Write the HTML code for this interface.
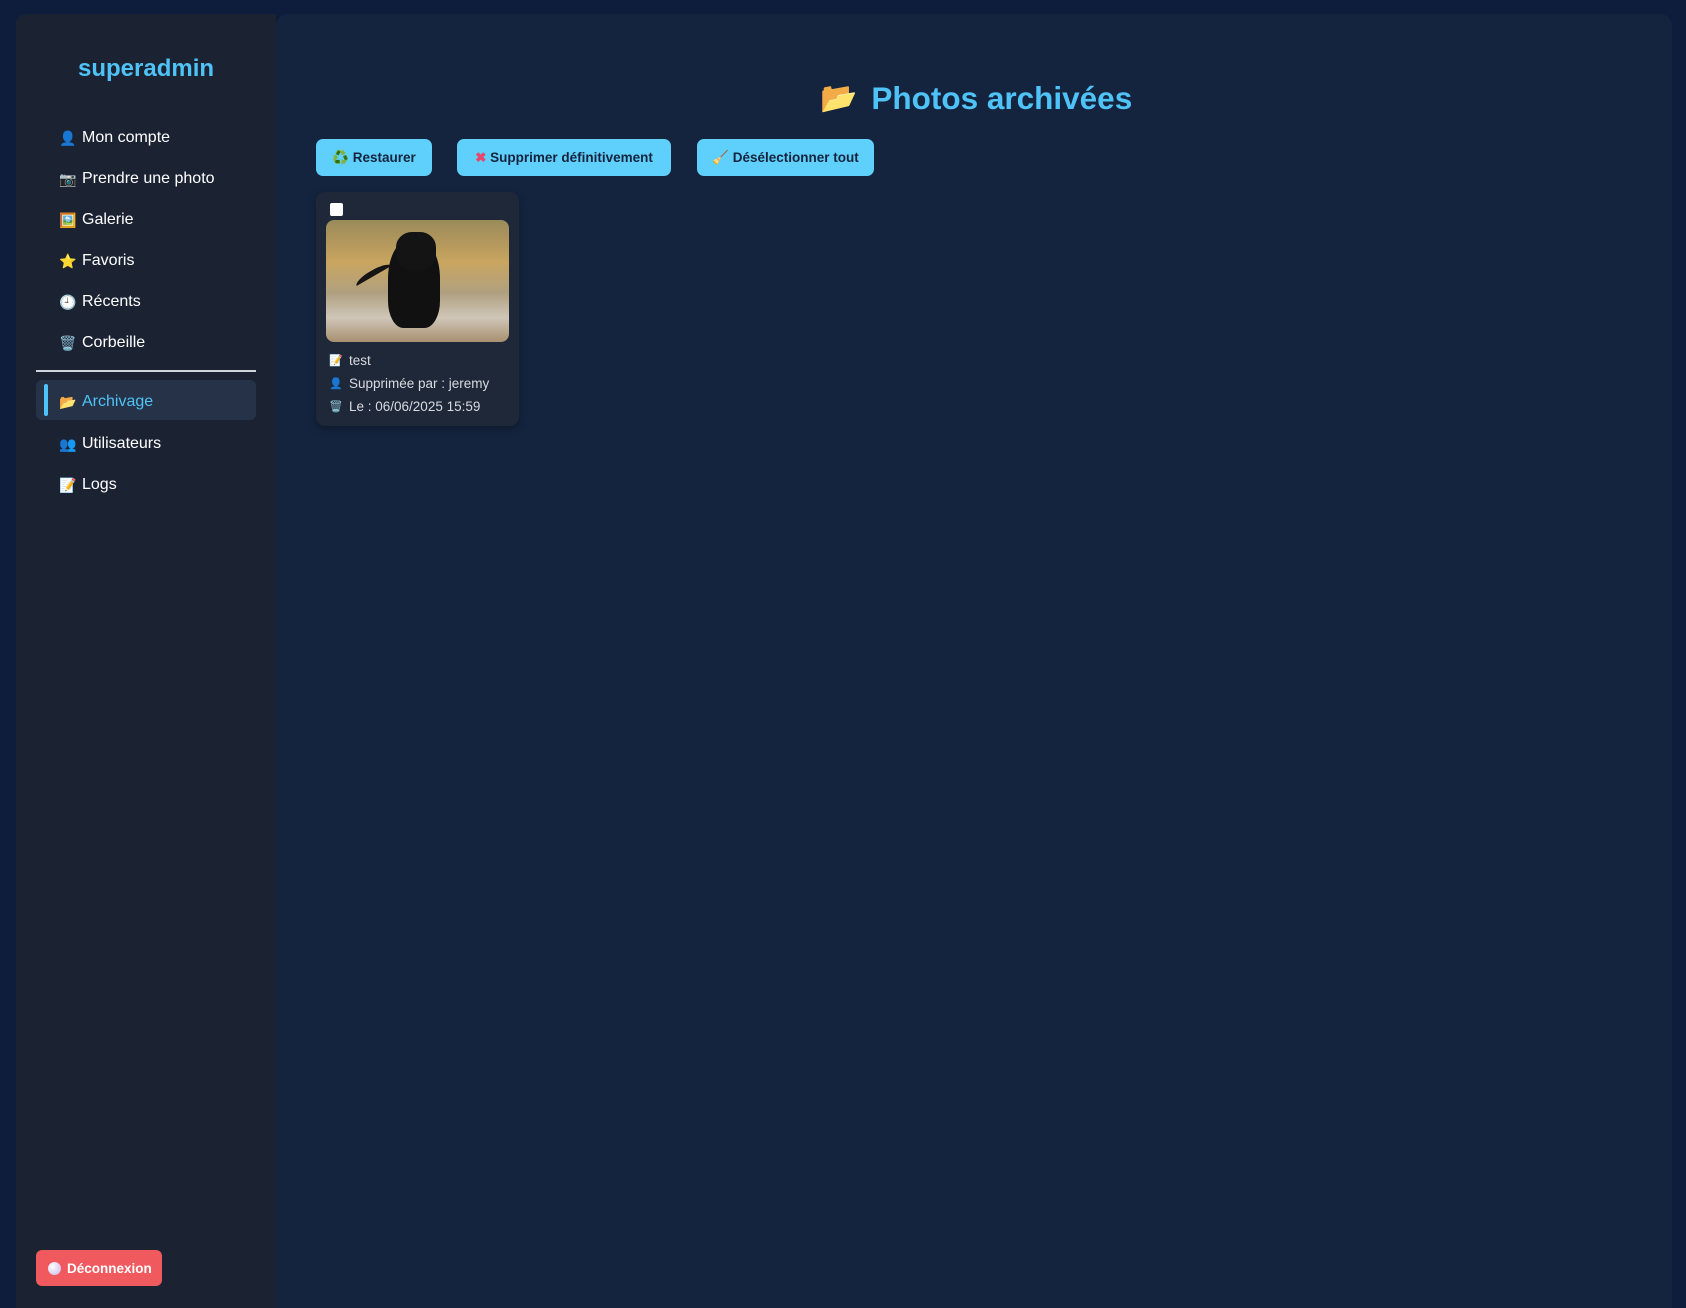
<!DOCTYPE html>
<html><head><meta charset="utf-8"><style>
*{box-sizing:border-box;margin:0;padding:0}
body{width:1686px;height:1308px;background:#0d1d3b;font-family:"Liberation Sans",sans-serif;position:relative;overflow:hidden}
.side{position:absolute;left:16px;top:14px;width:260px;height:1294px;background:#1b2333;border-radius:10px 0 0 0}
.side h1{position:absolute;left:0;width:260px;top:41px;text-align:center;color:#4fc3f7;font-size:24px;font-weight:bold}
.item{position:absolute;left:43px;font-size:16px;color:#fff;display:flex;align-items:center;height:24px}
.item .ic{width:17px;margin-right:6px;text-align:center;font-size:14px}
.div{position:absolute;left:20px;width:220px;top:356px;height:2px;background:#d0d4dc}
.act{position:absolute;left:20px;top:366px;width:220px;height:40px;background:#253247;border-radius:6px}
.act .bar{position:absolute;left:8px;top:4px;width:4px;height:32px;background:#4fc3f7;border-radius:2px}
.logout{position:absolute;left:20px;top:1236px;width:126px;height:36px;background:#f05a5e;border-radius:6px;color:#fff;font-weight:bold;font-size:13.5px;display:flex;align-items:center;padding-left:12px}
.logout i{width:13px;height:13px;border-radius:50%;background:radial-gradient(circle at 35% 35%,#fff,#c9b3e8);margin-right:6px;display:inline-block}
.main{position:absolute;left:276px;top:14px;width:1396px;height:1294px;background:#14243e;border-radius:12px 12px 0 0}
.title{position:absolute;left:544px;top:66px;color:#4fc3f7;font-size:31.5px;font-weight:bold;display:flex;align-items:center}
.btn{position:absolute;top:125px;height:37px;background:#5fcffb;border-radius:7px;color:#14243e;font-weight:bold;font-size:13.5px;display:flex;align-items:center;justify-content:center}
.card{position:absolute;left:40px;top:178px;width:203px;height:234px;background:#1e2838;border-radius:9px;box-shadow:0 3px 8px rgba(0,0,0,.3)}
.cb{position:absolute;left:14px;top:11px;width:13px;height:13px;background:#fff;border-radius:2px}
.img{position:absolute;left:10px;top:28px;width:183px;height:122px;border-radius:8px;overflow:hidden;background:linear-gradient(180deg,#9a8a5a 0%,#c9a560 35%,#b0a080 60%,#cfc6b8 80%,#a89070 100%)}
.ln{position:absolute;left:13px;font-size:13.5px;color:#d8dbe0;display:flex;align-items:center}
.ln span{width:14px;font-size:11px;margin-right:6px}
</style></head><body>
<div class="side">
<h1>superadmin</h1>
<div class="item" style="top:112px"><span class="ic">👤</span>Mon compte</div>
<div class="item" style="top:153px"><span class="ic">📷</span>Prendre une photo</div>
<div class="item" style="top:194px"><span class="ic">🖼️</span>Galerie</div>
<div class="item" style="top:235px"><span class="ic">⭐</span>Favoris</div>
<div class="item" style="top:276px"><span class="ic">🕘</span>Récents</div>
<div class="item" style="top:317px"><span class="ic">🗑️</span>Corbeille</div>
<div class="div"></div>
<div class="act"><div class="bar"></div></div>
<div class="item" style="top:376px;color:#4fc3f7"><span class="ic">📂</span>Archivage</div>
<div class="item" style="top:418px"><span class="ic">👥</span>Utilisateurs</div>
<div class="item" style="top:459px"><span class="ic">📝</span>Logs</div>
<div class="logout"><i></i>Déconnexion</div>
</div>
<div class="main">
<div class="title"><span style="font-size:30px;margin-right:14px">📂</span>Photos archivées</div>
<div class="btn" style="left:40px;width:116px">♻️&nbsp;Restaurer</div>
<div class="btn" style="left:181px;width:214px"><span style="color:#e8466a">✖</span>&nbsp;Supprimer définitivement</div>
<div class="btn" style="left:421px;width:177px">🧹&nbsp;Désélectionner tout</div>
<div class="card">
<div class="cb"></div>
<div class="img">
<div style="position:absolute;left:62px;top:18px;width:52px;height:90px;background:#111;border-radius:45% 45% 30% 30%"></div>
<div style="position:absolute;left:70px;top:12px;width:40px;height:38px;background:#141414;border-radius:40%"></div>
<div style="position:absolute;left:28px;top:50px;width:40px;height:12px;border-top:6px solid #151515;border-radius:50%;transform:rotate(-30deg)"></div>
</div>
<div class="ln" style="top:161px"><span>📝</span>test</div>
<div class="ln" style="top:184px"><span>👤</span>Supprimée par : jeremy</div>
<div class="ln" style="top:207px"><span>🗑️</span>Le : 06/06/2025 15:59</div>
</div>
</div>
</body></html>
